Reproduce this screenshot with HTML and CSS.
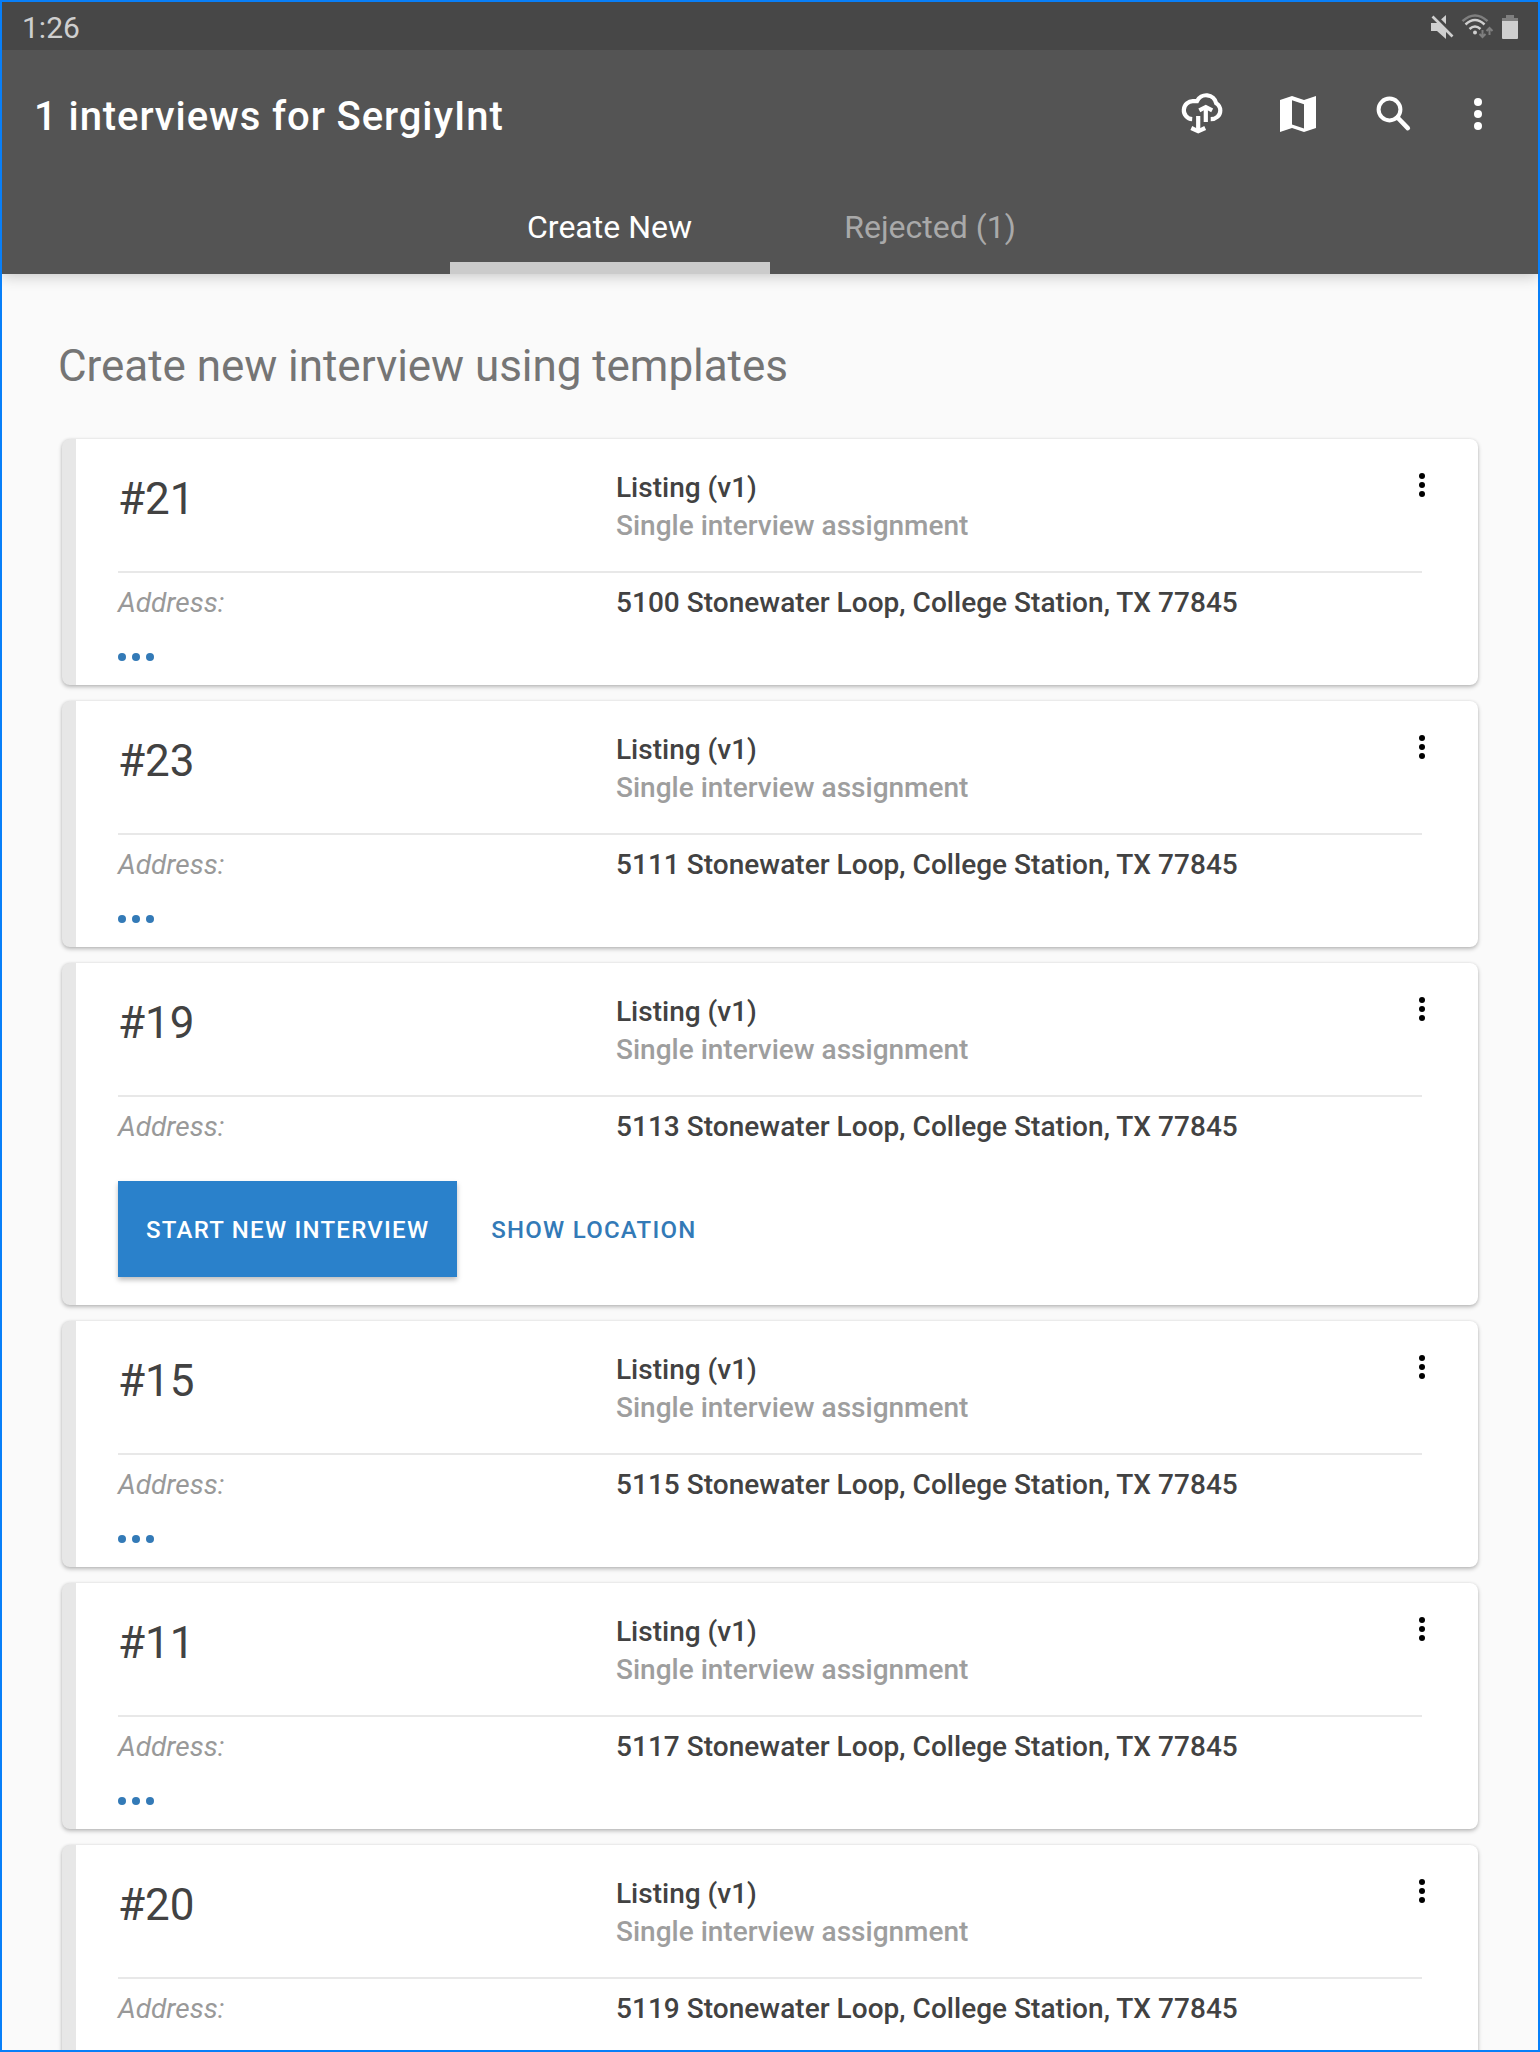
FILE: index.html
```html
<!DOCTYPE html>
<html lang="en">
<head>
<meta charset="utf-8">
<title>Interviews</title>
<link rel="stylesheet" href="styles.css">
</head>
<body>
<svg class="defs" width="0" height="0">
  <symbol id="more" viewBox="0 0 8 24"><circle cx="4" cy="3" r="3"/><circle cx="4" cy="12" r="3"/><circle cx="4" cy="21" r="3"/></symbol>
  <symbol id="dots" viewBox="0 0 36 8"><circle cx="4" cy="4" r="4"/><circle cx="18" cy="4" r="4"/><circle cx="32" cy="4" r="4"/></symbol>
</svg>
<div class="screen">
  <header class="header">
    <div class="status">
      <span class="time">1:26</span>
      <svg class="mute" width="24" height="24" viewBox="0 0 24 24"><path d="M1 8h6l9-8v24l-9-8H1z" fill="#cfcfcf"/><path d="M3-1l22 22" stroke="#474747" stroke-width="4"/><path d="M2.5 1.5l20 20" stroke="#cfcfcf" stroke-width="2.6"/></svg>
      <svg class="wifi" width="34" height="26" viewBox="0 0 34 26" fill="none"><path d="M1.5 7.2Q14-4.3 26.5 7.2" stroke="#7f7f7f" stroke-width="2.5"/><path d="M4.5 10.5Q14 1.5 23.5 10.5M8.5 15Q14 10 19.5 15" stroke="#cfcfcf" stroke-width="2.5"/><circle cx="14" cy="18.5" r="2" fill="#cfcfcf"/><path d="M21.5 16v7M18.5 20l3 3 3-3M28.5 21v-7M25.5 17l3-3 3 3" stroke="#7f7f7f" stroke-width="2"/></svg>
      <svg width="16" height="24" viewBox="0 0 16 24"><path d="M4 0h8v3h4v4H0V3h4z" fill="#7f7f7f"/><path d="M0 6h16v17q0 1-1 1H1q-1 0-1-1z" fill="#cfcfcf"/></svg>
    </div>
    <div class="toolbar">
      <h1 class="title">1 interviews for SergiyInt</h1>
      <svg class="sync" width="48" height="48" viewBox="0 0 48 48" fill="none" stroke="#fff" stroke-width="4.2"><path d="M14.2 29.2A9 9 0 1 1 15.5 11.2H19A10.2 10.2 0 0 1 38.2 13.2C41 15 42.3 17.500 42.300 20.500C42.300 25.500 38 29.200 32.700 29.200"/><path d="M27.800 32V17M20.200 26v14"/><path d="M21.300 20.300L27.800 17l6.400 3.300M13.300 38L20.200 41.300 27.200 38"/></svg>
      <svg class="map" width="48" height="48" viewBox="0 0 48 48" fill="#fff" fill-rule="evenodd"><path d="M6 10L18 6l12 4 12-4v32l-12 4-12-4-12 4zM18 10.200v24.300l12 4V14.200z"/></svg>
      <svg class="search" width="48" height="48" viewBox="0 0 48 48" fill="none" stroke="#fff"><circle cx="18.500" cy="19.500" r="10.900" stroke-width="4"/><path d="M26.500 27.500l10.300 10.600" stroke-width="4.600" stroke-linecap="round"/></svg>
      <svg width="48" height="48" viewBox="0 0 48 48" fill="#fff"><circle cx="24" cy="12" r="4"/><circle cx="24" cy="24" r="4"/><circle cx="24" cy="36" r="4"/></svg>
    </div>
    <nav class="tabs">
      <div class="tab tab-active">Create New</div>
      <div class="tab">Rejected (1)</div>
    </nav>
  </header>
  <main class="content">
    <h2 class="heading">Create new interview using templates</h2>
    <article class="card">
      <div class="head"><div class="number">#21</div><div class="info"><div>Listing (v1)</div><div class="kind">Single interview assignment</div></div><svg class="menu" width="8" height="24"><use href="#more"/></svg></div>
      <div class="row"><div class="label">Address:</div><div class="value">5100 Stonewater Loop, College Station, TX 77845</div></div>
      <svg class="expand" width="36" height="8"><use href="#dots"/></svg>
    </article>
    <article class="card">
      <div class="head"><div class="number">#23</div><div class="info"><div>Listing (v1)</div><div class="kind">Single interview assignment</div></div><svg class="menu" width="8" height="24"><use href="#more"/></svg></div>
      <div class="row"><div class="label">Address:</div><div class="value">5111 Stonewater Loop, College Station, TX 77845</div></div>
      <svg class="expand" width="36" height="8"><use href="#dots"/></svg>
    </article>
    <article class="card card-open">
      <div class="head"><div class="number">#19</div><div class="info"><div>Listing (v1)</div><div class="kind">Single interview assignment</div></div><svg class="menu" width="8" height="24"><use href="#more"/></svg></div>
      <div class="row"><div class="label">Address:</div><div class="value">5113 Stonewater Loop, College Station, TX 77845</div></div>
      <div class="actions"><button class="btn btn-primary">START NEW INTERVIEW</button><button class="btn">SHOW LOCATION</button></div>
    </article>
    <article class="card">
      <div class="head"><div class="number">#15</div><div class="info"><div>Listing (v1)</div><div class="kind">Single interview assignment</div></div><svg class="menu" width="8" height="24"><use href="#more"/></svg></div>
      <div class="row"><div class="label">Address:</div><div class="value">5115 Stonewater Loop, College Station, TX 77845</div></div>
      <svg class="expand" width="36" height="8"><use href="#dots"/></svg>
    </article>
    <article class="card">
      <div class="head"><div class="number">#11</div><div class="info"><div>Listing (v1)</div><div class="kind">Single interview assignment</div></div><svg class="menu" width="8" height="24"><use href="#more"/></svg></div>
      <div class="row"><div class="label">Address:</div><div class="value">5117 Stonewater Loop, College Station, TX 77845</div></div>
      <svg class="expand" width="36" height="8"><use href="#dots"/></svg>
    </article>
    <article class="card">
      <div class="head"><div class="number">#20</div><div class="info"><div>Listing (v1)</div><div class="kind">Single interview assignment</div></div><svg class="menu" width="8" height="24"><use href="#more"/></svg></div>
      <div class="row"><div class="label">Address:</div><div class="value">5119 Stonewater Loop, College Station, TX 77845</div></div>
      <svg class="expand" width="36" height="8"><use href="#dots"/></svg>
    </article>
  </main>
</div>
</body>
</html>
```
FILE: styles.css
```css
* { box-sizing: border-box; }
body { margin: 0; font-family: Roboto, sans-serif; }
svg { display: block; flex: none; }
.defs { display: none; }
h1, h2 { margin: 0; font-weight: 400; }

.screen {
  width: 1540px;
  height: 2052px;
  border: 2px solid #087ff8;
  background: #fafafa;
  overflow: hidden;
}

.header {
  position: relative;
  background: #545454;
  box-shadow: 0 2px 14px rgba(0, 0, 0, 0.22);
}
.status {
  display: flex;
  align-items: center;
  height: 48px;
  padding: 2px 20px 0;
  background: #474747;
}
.time {
  flex: 1;
  padding-top: 2px;
  font-size: 30px;
  line-height: 44px;
  color: #cfcfcf;
}
.mute { margin-right: 7px; }
.wifi { margin-right: 7px; }

.toolbar {
  display: flex;
  align-items: center;
  height: 128px;
  padding: 0 36px 0 32px;
}
.title {
  flex: 1;
  padding-top: 6px;
  font-size: 40px;
  font-weight: 500;
  line-height: 60px;
  letter-spacing: 0.92px;
  color: #fff;
}
.sync { margin-right: 48px; }
.map { margin-right: 49px; }
.search { margin-right: 35px; }

.tabs {
  display: flex;
  justify-content: center;
  height: 96px;
}
.tab {
  width: 320px;
  padding-top: 2px;
  font-size: 32px;
  line-height: 94px;
  text-align: center;
  color: #a9a9a9;
}
.tab-active {
  padding-right: 1px;
  color: #fff;
  box-shadow: inset 0 -12px #cbcbcb;
}

.content {
  display: flex;
  flex-direction: column;
  gap: 16px;
  padding: 61px 60px 0;
}
.heading {
  height: 88px;
  margin: 0 -4px;
  padding-top: 1px;
  font-size: 44px;
  line-height: 60px;
  letter-spacing: -0.05px;
  color: #757575;
}

.card {
  flex: none;
  height: 246px;
  padding: 0 56px 0 42px;
  border-left: 14px solid #e7e7e7;
  border-radius: 8px;
  background: #fff;
  color: #424242;
  box-shadow: 0 2px 4px rgba(0, 0, 0, 0.26), 0 0 3px rgba(0, 0, 0, 0.08);
}
.card-open { height: 342px; }
.head {
  display: grid;
  grid-template-columns: 498px 1fr auto;
  height: 134px;
  border-bottom: 2px solid #e8e8e8;
}
.number {
  padding-top: 34px;
  font-size: 44px;
  line-height: 52px;
}
.info {
  padding-top: 30px;
  font-size: 28px;
  font-weight: 500;
  line-height: 38px;
}
.kind { color: #9e9e9e; }
.menu { margin: 34px -4px 0 0; fill: #000; }
.row {
  display: grid;
  grid-template-columns: 498px 1fr;
  padding-top: 11px;
  font-size: 28px;
  line-height: 38px;
}
.label { font-style: italic; color: #999; }
.value { font-weight: 500; letter-spacing: 0.03px; }
.expand { margin-top: 31px; fill: #337ab7; }

.actions {
  display: flex;
  gap: 6px;
  margin-top: 35px;
}
.btn {
  height: 96px;
  padding: 2px 28px 0;
  border: 0;
  background: none;
  font: 500 24px/94px Roboto, sans-serif;
  letter-spacing: 1.25px;
  color: #337ab7;
}
.btn-primary {
  background: #2a81cb;
  color: #fff;
  box-shadow: 0 3px 5px rgba(0, 0, 0, 0.26);
}
```
